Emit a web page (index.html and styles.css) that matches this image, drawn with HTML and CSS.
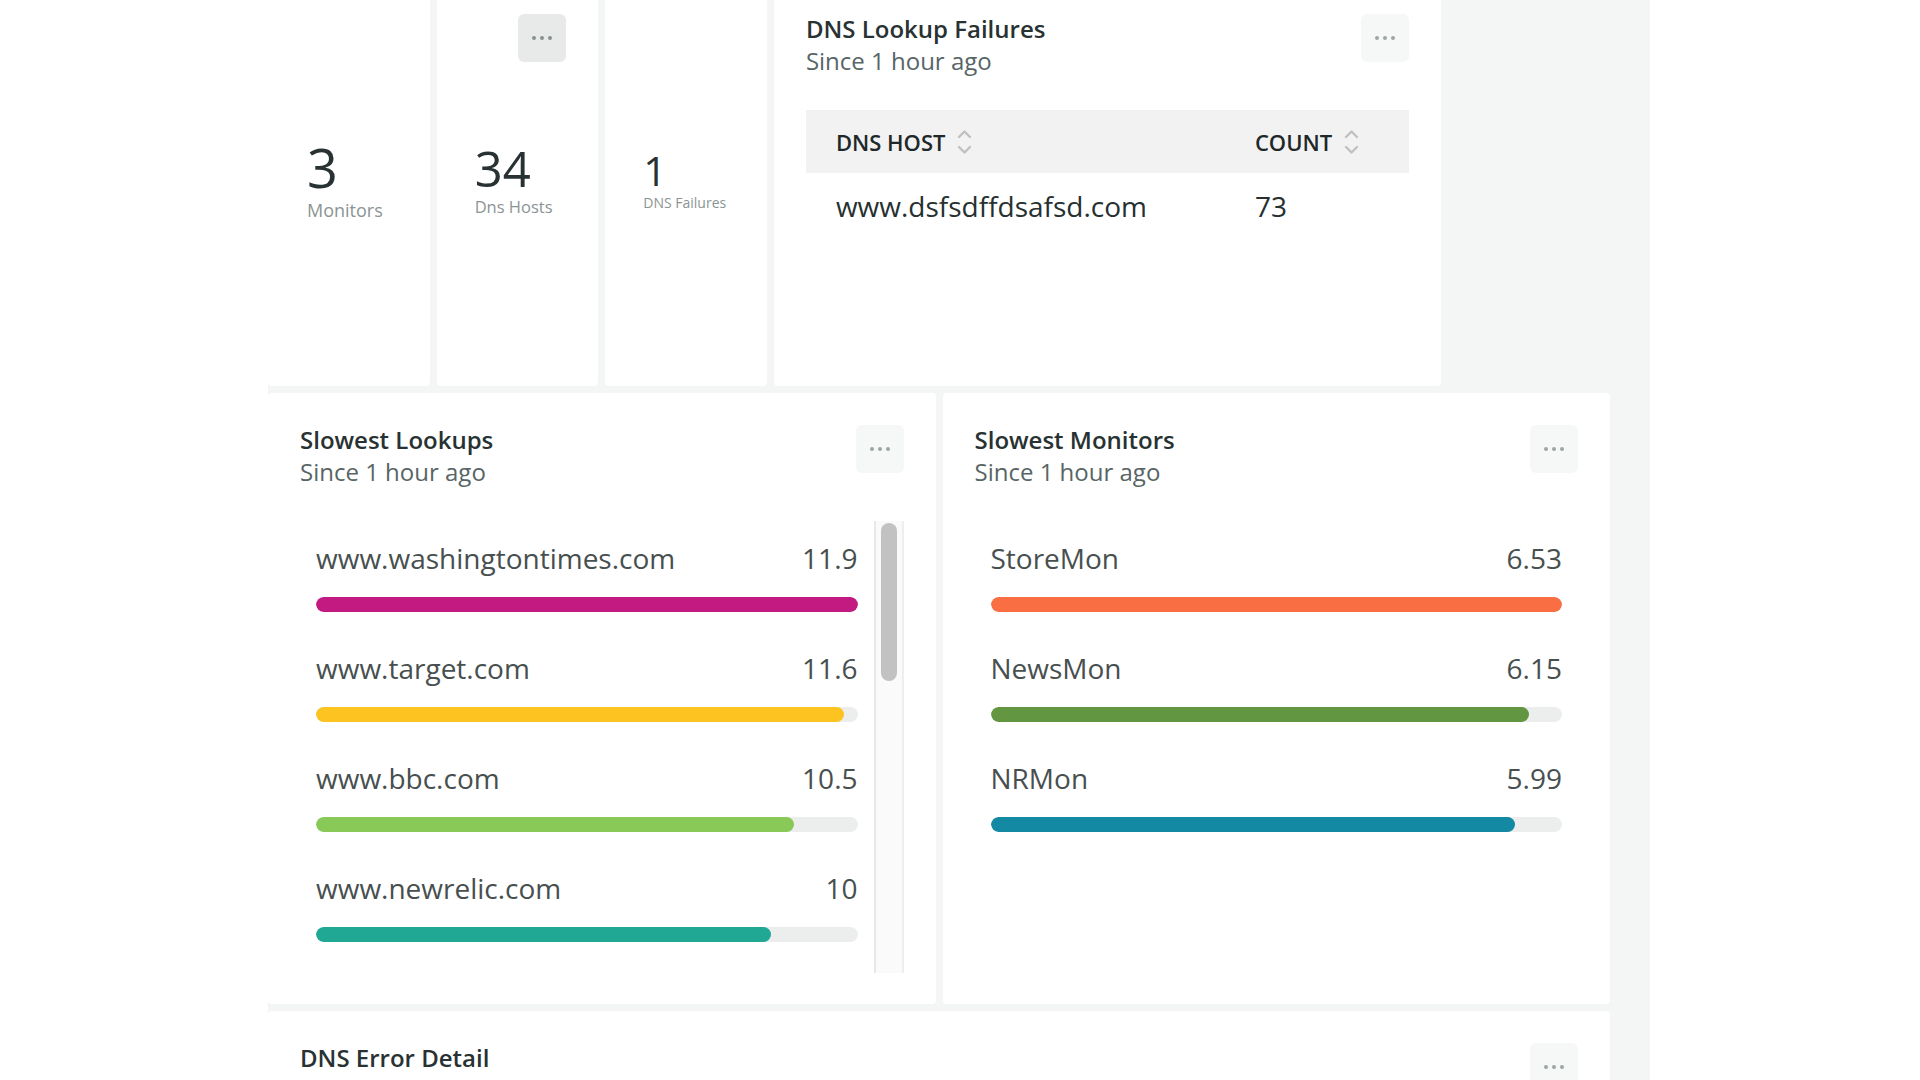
FILE: index.html
```html
<!DOCTYPE html>
<html lang="en">
<head>
<meta charset="utf-8">
<title>DNS Dashboard</title>
<link rel="stylesheet" href="styles.css">
</head>
<body>
<main class="dashboard">
  <div class="grid">
    <section class="card billboard bb-lg">
      <div class="bb-value">3</div>
      <div class="bb-label">Monitors</div>
    </section>
    <section class="card billboard bb-md">
      <button class="menu-btn menu-btn--hover menu-btn--overlay" aria-label="More"><span></span><span></span><span></span></button>
      <div class="bb-value">34</div>
      <div class="bb-label">Dns Hosts</div>
    </section>
    <section class="card billboard bb-sm">
      <div class="bb-value">1</div>
      <div class="bb-label">DNS Failures</div>
    </section>
    <section class="card widget span-4">
      <header class="widget-head">
        <div class="widget-titles">
          <h2 class="widget-title">DNS Lookup Failures</h2>
          <p class="widget-sub">Since 1 hour ago</p>
        </div>
        <button class="menu-btn" aria-label="More"><span></span><span></span><span></span></button>
      </header>
      <table class="data-table">
        <thead>
          <tr>
            <th class="col-host"><span class="th-inner">DNS HOST
              <svg class="sort" width="15" height="28" viewBox="0 0 15 28"><polyline points="2,9 7.5,3.5 13,9"/><polyline points="2,19 7.5,24.5 13,19"/></svg></span></th>
            <th><span class="th-inner">COUNT
              <svg class="sort" width="15" height="28" viewBox="0 0 15 28"><polyline points="2,9 7.5,3.5 13,9"/><polyline points="2,19 7.5,24.5 13,19"/></svg></span></th>
          </tr>
        </thead>
        <tbody>
          <tr><td>www.dsfsdffdsafsd.com</td><td>73</td></tr>
        </tbody>
      </table>
    </section>

    <section class="card widget span-4">
      <header class="widget-head">
        <div class="widget-titles">
          <h2 class="widget-title">Slowest Lookups</h2>
          <p class="widget-sub">Since 1 hour ago</p>
        </div>
        <button class="menu-btn" aria-label="More"><span></span><span></span><span></span></button>
      </header>
      <div class="bars">
        <ul class="bar-list">
          <li class="bar-item">
            <div class="bar-row"><span>www.washingtontimes.com</span><span>11.9</span></div>
            <div class="bar-track"><div class="bar-fill c-magenta" style="width:100%"></div></div>
          </li>
          <li class="bar-item">
            <div class="bar-row"><span>www.target.com</span><span>11.6</span></div>
            <div class="bar-track"><div class="bar-fill c-yellow" style="width:97.5%"></div></div>
          </li>
          <li class="bar-item">
            <div class="bar-row"><span>www.bbc.com</span><span>10.5</span></div>
            <div class="bar-track"><div class="bar-fill c-lime" style="width:88.2%"></div></div>
          </li>
          <li class="bar-item">
            <div class="bar-row"><span>www.newrelic.com</span><span>10</span></div>
            <div class="bar-track"><div class="bar-fill c-teal" style="width:84%"></div></div>
          </li>
        </ul>
        <div class="scrollbar"><div class="scroll-thumb"></div></div>
      </div>
    </section>

    <section class="card widget span-4">
      <header class="widget-head">
        <div class="widget-titles">
          <h2 class="widget-title">Slowest Monitors</h2>
          <p class="widget-sub">Since 1 hour ago</p>
        </div>
        <button class="menu-btn" aria-label="More"><span></span><span></span><span></span></button>
      </header>
      <div class="bars">
        <ul class="bar-list">
          <li class="bar-item">
            <div class="bar-row"><span>StoreMon</span><span>6.53</span></div>
            <div class="bar-track"><div class="bar-fill c-orange" style="width:100%"></div></div>
          </li>
          <li class="bar-item">
            <div class="bar-row"><span>NewsMon</span><span>6.15</span></div>
            <div class="bar-track"><div class="bar-fill c-green" style="width:94.2%"></div></div>
          </li>
          <li class="bar-item">
            <div class="bar-row"><span>NRMon</span><span>5.99</span></div>
            <div class="bar-track"><div class="bar-fill c-blue" style="width:91.7%"></div></div>
          </li>
        </ul>
      </div>
    </section>

    <section class="card widget span-8">
      <header class="widget-head">
        <div class="widget-titles">
          <h2 class="widget-title">DNS Error Detail</h2>
        </div>
        <button class="menu-btn" aria-label="More"><span></span><span></span><span></span></button>
      </header>
    </section>
  </div>
</main>
</body>
</html>
```

FILE: styles.css
```css
* { box-sizing: border-box; }

html, body {
  margin: 0;
  background: #ffffff;
  font-family: "Open Sans", "Liberation Sans", sans-serif;
  overflow: hidden;
}

.dashboard {
  margin: -18px 0 0 268px;
  width: 1382px;
  min-height: 1120px;
  padding-right: 40px;
  background: #f4f5f5;
}

.grid {
  display: grid;
  grid-template-columns: repeat(8, 1fr);
  grid-template-rows: 404px 611px 400px;
  gap: 7px;
}

.card {
  background: #ffffff;
  border-radius: 4px;
  padding: 32px;
  min-width: 0;
}

.span-4 { grid-column: span 4; }
.span-8 { grid-column: span 8; }

/* Billboards */
.billboard {
  position: relative;
  display: flex;
  flex-direction: column;
  justify-content: center;
  padding: 0 0 8px 38px;
}
.bb-lg { padding-left: 39px; }
.bb-value {
  color: #283232;
  line-height: 1.1;
}
.bb-label {
  color: #8b9494;
  line-height: normal;
}
.bb-lg .bb-value { font-size: 54px; }
.bb-lg .bb-label { font-size: 18px; }
.bb-md .bb-value { font-size: 49px; }
.bb-md .bb-label { font-size: 16.5px; }
.bb-sm .bb-value { font-size: 41px; }
.bb-sm .bb-label { font-size: 14px; }

/* Menu button */
.menu-btn {
  flex: none;
  width: 48px;
  height: 48px;
  border: 0;
  border-radius: 6px;
  background: #f6f7f7;
  display: flex;
  align-items: center;
  justify-content: center;
  gap: 4px;
  padding: 0;
  cursor: pointer;
}
.menu-btn span {
  width: 4px;
  height: 4px;
  border-radius: 50%;
  background: #9ea6a6;
}
.menu-btn--hover { background: #e8e9e9; }
.menu-btn--hover span { background: #8a9292; }
.menu-btn--overlay {
  position: absolute;
  top: 32px;
  right: 32px;
}

/* Widget header */
.widget-head {
  display: flex;
  justify-content: space-between;
  align-items: flex-start;
}
.widget-title {
  margin: 0;
  font-size: 24px;
  line-height: 30px;
  font-weight: 600;
  color: #283232;
}
.widget-sub {
  margin: 2px 0 0;
  font-size: 24px;
  line-height: 30px;
  font-weight: 400;
  color: #576566;
}

/* Table */
.data-table {
  width: 100%;
  margin-top: 34px;
  border-collapse: collapse;
}
.data-table th {
  height: 63px;
  padding: 0 30px;
  background: #f2f2f2;
  text-align: left;
  font-size: 22px;
  font-weight: 600;
  color: #1f2828;
  white-space: nowrap;
  vertical-align: middle;
}
.data-table .col-host { width: 419px; }
.th-inner {
  display: inline-flex;
  align-items: center;
  gap: 12px;
}
.sort {
  fill: none;
  stroke: #bfc1c1;
  stroke-width: 2.4;
  stroke-linecap: round;
  stroke-linejoin: round;
}
.data-table td {
  padding: 14px 30px 0;
  font-size: 28px;
  line-height: 38px;
  color: #263030;
}

/* Bar lists */
.bars {
  display: flex;
  height: 452px;
  margin-top: 34px;
}
.bar-list {
  flex: 1;
  min-width: 0;
  margin: 0;
  padding: 17px 16px 0;
  list-style: none;
  overflow: hidden;
}
.bar-item { margin-bottom: 36px; }
.bar-row {
  display: flex;
  justify-content: space-between;
  font-size: 28px;
  line-height: 40px;
  color: #474f4f;
}
.bar-track {
  margin-top: 19px;
  height: 15px;
  border-radius: 8px;
  background: #eceeee;
  overflow: hidden;
}
.bar-fill {
  height: 100%;
  border-radius: 8px;
}
.c-magenta { background: #c21a80; }
.c-yellow { background: #fdc321; }
.c-lime { background: #88c958; }
.c-teal { background: #21a895; }
.c-orange { background: #f96e42; }
.c-green { background: #629640; }
.c-blue { background: #1389a3; }

.scrollbar {
  flex: none;
  width: 30px;
  padding-top: 2px;
  background: #fafafa;
  border-left: 2px solid #e8e8e8;
  border-right: 2px solid #eeeeee;
}
.scroll-thumb {
  width: 16px;
  height: 158px;
  margin: 0 auto;
  border-radius: 8px;
  background: #c2c2c2;
}
```
